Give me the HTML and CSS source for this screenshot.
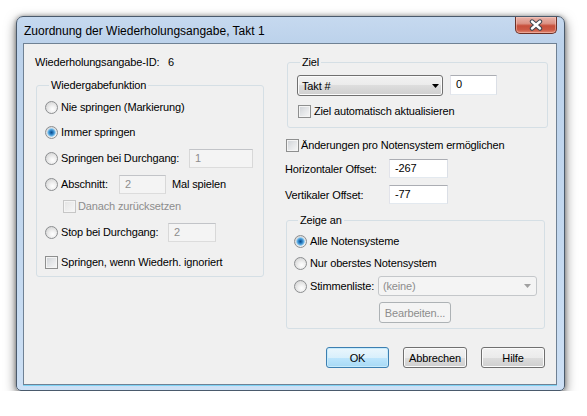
FILE: index.html
```html
<!DOCTYPE html>
<html lang="de">
<head>
<meta charset="utf-8">
<title>Zuordnung der Wiederholungsangabe</title>
<link rel="stylesheet" href="styles.css">
</head>
<body>
<div class="window">
  <div class="titlebar">
    <span class="title">Zuordnung der Wiederholungsangabe, Takt 1</span>
    <div class="close">
      <svg width="14" height="12" viewBox="0 0 14 12">
        <path d="M3 2.5 L11 9.5 M11 2.5 L3 9.5" stroke="#3d4650" stroke-width="4.4" stroke-linecap="round"/>
        <path d="M3 2.5 L11 9.5 M11 2.5 L3 9.5" stroke="#ffffff" stroke-width="2.4" stroke-linecap="round"/>
      </svg>
    </div>
  </div>
  <div class="client">
    <div class="columns">
      <div class="col-left">
        <div class="id-row"><span class="id-label">Wiederholungsangabe-ID:</span><span>6</span></div>
        <fieldset class="group group-playback">
          <legend>Wiedergabefunktion</legend>
          <div class="row"><span class="radio"></span><span>Nie springen (Markierung)</span></div>
          <div class="row sp5"><span class="radio checked"></span><span>Immer springen</span></div>
          <div class="row sp6"><span class="radio"></span><span class="lbl-pass">Springen bei Durchgang:</span><span class="input disabled pass-input">1</span></div>
          <div class="row sp6"><span class="radio"></span><span class="lbl-section">Abschnitt:</span><span class="input disabled section-input">2</span><span class="after-input">Mal spielen</span></div>
          <div class="row sp2"><span class="check disabled reset-check"></span><span class="muted">Danach zurücksetzen</span></div>
          <div class="row sp6"><span class="radio"></span><span class="lbl-stop">Stop bei Durchgang:</span><span class="input disabled stop-input">2</span></div>
          <div class="row sp10"><span class="check"></span><span>Springen, wenn Wiederh. ignoriert</span></div>
        </fieldset>
      </div>
      <div class="col-right">
        <fieldset class="group group-target">
          <legend>Ziel</legend>
          <div class="target-row">
            <div class="select">
              <span>Takt #</span>
              <svg width="7" height="4" viewBox="0 0 7 4"><path d="M0 0 H7 L3.5 4 Z" fill="#000"/></svg>
            </div>
            <span class="input target-input">0</span>
          </div>
          <div class="auto-row"><span class="check"></span><span>Ziel automatisch aktualisieren</span></div>
        </fieldset>
        <div class="row per-staff"><span class="check"></span><span>Änderungen pro Notensystem ermöglichen</span></div>
        <div class="offset-row horiz"><span class="offset-label">Horizontaler Offset:</span><span class="input offset-input">-267</span></div>
        <div class="offset-row vert"><span class="offset-label">Vertikaler Offset:</span><span class="input offset-input">-77</span></div>
        <fieldset class="group group-show">
          <legend>Zeige an</legend>
          <div class="row"><span class="radio checked"></span><span>Alle Notensysteme</span></div>
          <div class="row sp2"><span class="radio"></span><span>Nur oberstes Notensystem</span></div>
          <div class="row sp3"><span class="radio"></span><span class="lbl-voices">Stimmenliste:</span>
            <div class="select disabled voices-select">
              <span>(keine)</span>
              <svg width="7" height="4" viewBox="0 0 7 4"><path d="M0 0 H7 L3.5 4 Z" fill="#a0a0a0"/></svg>
            </div>
          </div>
          <div class="edit-row"><span class="btn disabled edit-btn">Bearbeiten...</span></div>
        </fieldset>
      </div>
    </div>
    <div class="buttons">
      <span class="btn default ok-btn">OK</span>
      <span class="btn">Abbrechen</span>
      <span class="btn">Hilfe</span>
    </div>
  </div>
</div>
</body>
</html>
```
FILE: styles.css
```css
* { box-sizing: border-box; }

body {
  margin: 0;
  background: #ffffff;
  font-family: "Liberation Sans", Arial, sans-serif;
  font-size: 11px;
  letter-spacing: -0.15px;
  color: #000;
}

.window {
  margin: 16px 0 0 16px;
  width: 549px;
  height: 375px;
  border: 1px solid #4a5a6c;
  border-radius: 7px 7px 5px 5px;
  padding: 0 7px 5px 6px;
  background: linear-gradient(180deg, #c6d9ef 0, #bcd2eb 26px, #c3d8ef 60%, #cde0f5 100%);
  box-shadow: 0 4px 12px rgba(0, 0, 0, 0.55), 0 0 4px rgba(0, 0, 0, 0.35);
  display: flex;
  flex-direction: column;
}

.titlebar {
  height: 26px;
  display: flex;
  justify-content: space-between;
  align-items: flex-start;
}

.title {
  font-size: 12px;
  letter-spacing: 0;
  line-height: 16px;
  padding: 6px 0 0 1px;
  color: #000;
}

.close {
  width: 42px;
  height: 17px;
  border: 1px solid #6b3128;
  border-top: none;
  border-radius: 0 0 5px 5px;
  background: linear-gradient(180deg, #e9b3aa 0%, #dc9385 40%, #c7503c 55%, #cc5a45 80%, #e08a76 100%);
  box-shadow: inset 0 0 0 1px rgba(255, 210, 200, 0.45);
  display: flex;
  align-items: center;
  justify-content: center;
}

.client {
  height: 342px;
  border: 1px solid #6f8194;
  background: #f0f0f0;
  padding: 11px 8px 0 11px;
  display: flex;
  flex-direction: column;
  box-shadow: 0 1px 0 #7fd3f5;
}

.columns {
  display: flex;
  gap: 21px;
}

.col-left {
  width: 229px;
  display: flex;
  flex-direction: column;
}

.col-right {
  width: 263px;
  display: flex;
  flex-direction: column;
}

.id-row {
  height: 14px;
  line-height: 14px;
  display: flex;
}

.id-label { width: 133px; }

.group {
  margin: 0;
  border: 1px solid #d5dfe5;
  border-radius: 3px;
  min-width: 0;
}

.group legend {
  padding: 0 2px;
  margin-left: 4px;
  line-height: 14px;
}

.group-playback {
  margin: 9px 0 0 1px;
  width: 228px;
  padding: 5px 0 4px 8px;
}

.row {
  display: flex;
  align-items: center;
  height: 20px;
  white-space: nowrap;
}

.sp2 { margin-top: 2px; }
.sp3 { margin-top: 3px; }
.sp5 { margin-top: 5px; }
.sp6 { margin-top: 6px; }
.sp10 { margin-top: 10px; }

.radio {
  flex: none;
  width: 13px;
  height: 13px;
  margin-right: 3px;
  border-radius: 50%;
  border: 1px solid #8c8e90;
  background: radial-gradient(circle at 60% 65%, #ffffff 0, #f2f2f2 30%, #d9d9d9 75%, #c4c4c4 100%);
}

.radio.checked {
  background:
    radial-gradient(circle at 50% 50%, #0e4d8a 0, #2172b8 1.5px, #56a6dc 3px, #9fd0f0 4px, rgba(255,255,255,0) 4.6px),
    radial-gradient(circle at 60% 65%, #ffffff 0, #f2f2f2 30%, #d9d9d9 75%, #c4c4c4 100%);
}

.check {
  flex: none;
  width: 13px;
  height: 13px;
  margin-right: 3px;
  border: 1px solid #8e8f8f;
  background: linear-gradient(135deg, #cdd0d5 0%, #e4e6e8 50%, #f7f7f7 100%);
  box-shadow: inset 0 0 0 1px #f4f4f4;
}

.check.disabled {
  border-color: #c6c6c6;
  background: linear-gradient(135deg, #e4e4e4 0%, #f7f7f7 100%);
}

.reset-check { margin-left: 18px; margin-right: 2px; }

.muted { color: #8d8d8d; }

.input {
  flex: none;
  display: block;
  height: 19px;
  line-height: 17px;
  padding-left: 5px;
  border: 1px solid;
  border-color: #abadb3 #dbdfe6 #e3e9ef #e2e3ea;
  background: #ffffff;
}

.input.disabled {
  background: #f4f4f4;
  border-color: #c2c4c8 #d8d8d8 #dcdcdc #d8d8d8;
  color: #8d8d8d;
}

.lbl-pass { width: 128px; }
.lbl-section { width: 58px; }
.lbl-stop { width: 107px; }
.pass-input { width: 64px; }
.section-input { width: 47px; }
.stop-input { width: 48px; }
.after-input { margin-left: 6px; }

.group-target {
  margin-left: 2px;
  width: 261px;
  padding: 6px 0 9px 9px;
}

.group-target legend { margin-left: 3px; }

.target-row {
  display: flex;
  height: 21px;
}

.select {
  flex: none;
  width: 146px;
  height: 21px;
  border: 1px solid #707070;
  border-radius: 3px;
  background: linear-gradient(180deg, #f2f2f2 0%, #ebebeb 50%, #dddddd 50%, #cfcfcf 100%);
  box-shadow: inset 0 0 0 1px #fbfbfb;
  display: flex;
  align-items: center;
  justify-content: space-between;
  padding: 0 3px 0 4px;
}

.select.disabled {
  background: #f4f4f4;
  border-color: #c4c7ca;
  box-shadow: none;
  color: #8d8d8d;
}

.target-input {
  width: 47px;
  height: 20px;
  margin-left: 7px;
}

.auto-row {
  display: flex;
  align-items: center;
  height: 14px;
  margin-top: 8px;
}

.auto-row .check { margin-left: 1px; }

.per-staff { margin-top: 7px; }
.per-staff .check { margin-left: 1px; margin-right: 2px; }

.offset-row {
  display: flex;
  align-items: center;
  height: 19px;
}

.horiz { margin-top: 4px; }
.vert { margin-top: 7px; }

.offset-label { width: 104px; }
.offset-input { width: 59px; }

.group-show {
  margin: 9px 0 0 1px;
  width: 259px;
  padding: 4px 0 5px 7px;
}

.lbl-voices { width: 68px; }

.voices-select {
  width: 159px;
  height: 20px;
  padding: 0 5px 0 4px;
}

.edit-row {
  display: flex;
  margin-top: 6px;
}

.btn {
  flex: none;
  width: 64px;
  height: 21px;
  border: 1px solid #707070;
  border-radius: 3px;
  background: linear-gradient(180deg, #f2f2f2 0%, #ebebeb 50%, #dddddd 50%, #cfcfcf 100%);
  box-shadow: inset 0 0 0 1px #fbfbfb;
  display: flex;
  align-items: center;
  justify-content: center;
  white-space: nowrap;
}

.btn.default {
  border-color: #3c7fb1;
  background: linear-gradient(180deg, #eaf6fd 0%, #d9f0fc 50%, #bee6fd 50%, #a7d9f5 100%);
  box-shadow: inset 0 0 0 1px #c7ebfc;
}

.btn.disabled {
  border-color: #adb2b5;
  background: #f4f4f4;
  box-shadow: none;
  color: #8d8d8d;
}

.edit-btn {
  width: 72px;
  margin-left: 85px;
}

.ok-btn { width: 63px; }

.buttons {
  display: flex;
  justify-content: flex-end;
  gap: 14px;
  margin-top: 18px;
  margin-right: 3px;
}
```
